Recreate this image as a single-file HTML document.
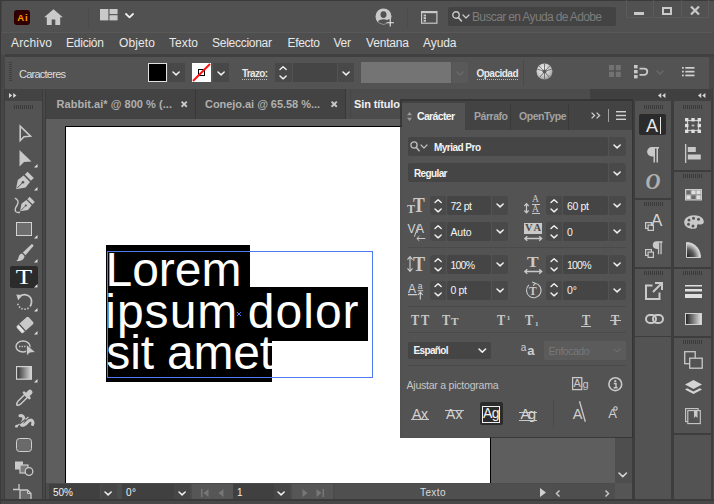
<!DOCTYPE html>
<html><head><meta charset="utf-8"><title>Illustrator</title>
<style>
html,body{margin:0;padding:0;}
body{width:714px;height:504px;overflow:hidden;background:#4a4a4a;position:relative;font-family:"Liberation Sans",sans-serif;font-size:12px;color:#e6e6e6;}
.a{position:absolute;}
.t{position:absolute;white-space:nowrap;line-height:16px;}
svg{position:absolute;overflow:visible;}
</style></head><body>
<div class="a" style="left:0px;top:0px;width:714px;height:504px;background:#474747;"></div>
<div class="a" style="left:0px;top:0px;width:714px;height:1px;background:#3a3a3a;"></div>
<div class="a" style="left:0px;top:0px;width:1px;height:504px;background:#3a3a3a;"></div>
<div class="a" style="left:1.5px;top:1px;width:712.5px;height:31px;background:#515151;border-top-left-radius:3px;"></div>
<div class="a" style="left:1px;top:32px;width:713px;height:23px;background:#4e4e4e;"></div>
<div class="a" style="left:2px;top:31.5px;width:710px;height:1px;background:#585858;"></div>
<div class="a" style="left:4.5px;top:54.3px;width:709.5px;height:2.4px;background:#404040;"></div>
<div class="a" style="left:5px;top:57px;width:704px;height:32px;background:#535353;"></div>
<div class="a" style="left:4px;top:89px;width:710px;height:415px;background:#3d3d3d;"></div>
<div class="a" style="left:14px;top:10px;width:16px;height:15px;background:#300000;border-radius:3px;"></div>
<svg style="left:43.5px;top:9px" width="19" height="16" viewBox="0 0 19 16"><path d="M9.5 0.3 L0.2 8.2 L2.8 8.2 L2.8 16 L7.7 16 L7.7 10.6 L11.3 10.6 L11.3 16 L16.2 16 L16.2 8.2 L18.8 8.2 Z" fill="#c9c9c9"/></svg>
<div class="a" style="left:88px;top:8px;width:1px;height:20px;background:#4c4c4c;"></div>
<svg style="left:99.8px;top:9.4px" width="17.6" height="11.4" viewBox="0 0 17.6 11.4"><rect x="0" y="0" width="8.4" height="11.4" fill="#c9c9c9"/><rect x="9.5" y="0" width="8.1" height="5.1" fill="#c9c9c9"/><rect x="9.5" y="6.2" width="8.1" height="5.2" fill="#c9c9c9"/></svg>
<svg style="left:126.0px;top:14.0px" width="7" height="3.4" viewBox="0 0 7 3.4"><path d="M0 0 L3.5 3.4 L7 0" fill="none" stroke="#f0f0f0" stroke-width="1.8" stroke-linecap="round" stroke-linejoin="round"/></svg>
<svg style="left:375.3px;top:7.5px" width="19" height="19" viewBox="0 0 19 19"><circle cx="8.5" cy="8.5" r="8" fill="#c9c9c9"/><ellipse cx="8.5" cy="6.6" rx="3" ry="3.4" fill="#515151"/><path d="M3 14 C3.6 10.4 13.4 10.4 14 14 C11.5 16.6 5.5 16.6 3 14Z" fill="#515151"/><circle cx="15.2" cy="14.7" r="3.6" fill="#515151"/><path d="M15.2 11 V18.4 M11.5 14.7 H18.9" stroke="#ececec" stroke-width="1.1"/></svg>
<div class="a" style="left:406.5px;top:8px;width:1px;height:20px;background:#4c4c4c;"></div>
<svg style="left:421px;top:11px" width="16.5" height="13" viewBox="0 0 16.5 13"><rect x="0.6" y="0.6" width="15.3" height="11.6" fill="none" stroke="#c9c9c9" stroke-width="1.2"/><rect x="0.6" y="0.6" width="15.3" height="1.6" fill="#c9c9c9"/><rect x="2.6" y="3.6" width="2.4" height="1.9" fill="#c9c9c9"/><rect x="2.6" y="6.2" width="2.4" height="1.9" fill="#c9c9c9"/><rect x="2.6" y="8.8" width="2.4" height="1.9" fill="#c9c9c9"/></svg>
<div class="a" style="left:448px;top:7px;width:168px;height:19px;background:#434343;border-radius:2px;"></div>
<svg style="left:452px;top:11px" width="10" height="11" viewBox="0 0 10 11"><circle cx="4" cy="4" r="3.2" fill="none" stroke="#c9c9c9" stroke-width="1.4"/><path d="M6.4 6.6 L9.5 10" stroke="#c9c9c9" stroke-width="1.6" stroke-linecap="round"/></svg>
<svg style="left:463.0px;top:14.5px" width="6" height="3" viewBox="0 0 6 3"><path d="M0 0 L3.0 3 L6 0" fill="none" stroke="#c9c9c9" stroke-width="1.3" stroke-linecap="round" stroke-linejoin="round"/></svg>
<div class="a" style="left:626px;top:0px;width:83px;height:18px;background:transparent;border:1px solid #5a5a5a;border-top:none;box-sizing:border-box;"></div>
<div class="a" style="left:653px;top:0px;width:1px;height:18px;background:#5a5a5a;"></div>
<div class="a" style="left:681px;top:0px;width:1px;height:18px;background:#5a5a5a;"></div>
<div class="a" style="left:634px;top:12px;width:10px;height:3px;background:#c9c9c9;"></div>
<div class="a" style="left:662px;top:7px;width:10px;height:8px;background:transparent;border:2px solid #c9c9c9;box-sizing:border-box;"></div>
<svg style="left:690px;top:6px" width="10" height="9" viewBox="0 0 10 9"><path d="M1 0.5 L9 8.5 M9 0.5 L1 8.5" stroke="#c9c9c9" stroke-width="2.2"/></svg>
<svg style="left:9px;top:62px" width="3" height="20" viewBox="0 0 3 20"><rect x="0" y="0" width="3" height="1" fill="#3f3f3f"/><rect x="0" y="2" width="3" height="1" fill="#3f3f3f"/><rect x="0" y="4" width="3" height="1" fill="#3f3f3f"/><rect x="0" y="6" width="3" height="1" fill="#3f3f3f"/><rect x="0" y="8" width="3" height="1" fill="#3f3f3f"/><rect x="0" y="10" width="3" height="1" fill="#3f3f3f"/><rect x="0" y="12" width="3" height="1" fill="#3f3f3f"/><rect x="0" y="14" width="3" height="1" fill="#3f3f3f"/><rect x="0" y="16" width="3" height="1" fill="#3f3f3f"/><rect x="0" y="18" width="3" height="1" fill="#3f3f3f"/></svg>
<div class="a" style="left:148px;top:63px;width:19px;height:19px;background:#000;border:1px solid #e0e0e0;box-sizing:border-box;"></div>
<div class="a" style="left:168px;top:63px;width:17px;height:19px;background:#484848;"></div>
<svg style="left:173.3px;top:71.55px" width="6.2" height="2.9" viewBox="0 0 6.2 2.9"><path d="M0 0 L3.1 2.9 L6.2 0" fill="none" stroke="#f0f0f0" stroke-width="1.5" stroke-linecap="round" stroke-linejoin="round"/></svg>
<svg style="left:192px;top:63px" width="19" height="19" viewBox="0 0 19 19"><rect x="0" y="0" width="19" height="19" fill="#fff"/><rect x="6.5" y="6.5" width="6" height="6" fill="none" stroke="#000" stroke-width="1"/><path d="M1 18 L18 1" stroke="#ff1010" stroke-width="2"/></svg>
<div class="a" style="left:213px;top:63px;width:16px;height:19px;background:#484848;"></div>
<svg style="left:217.9px;top:71.55px" width="6.2" height="2.9" viewBox="0 0 6.2 2.9"><path d="M0 0 L3.1 2.9 L6.2 0" fill="none" stroke="#f0f0f0" stroke-width="1.5" stroke-linecap="round" stroke-linejoin="round"/></svg>
<div class="a" style="left:275px;top:63px;width:17px;height:19px;background:#484848;"></div>
<svg style="left:280.4px;top:65.7px" width="6.2" height="13.6" viewBox="0 0 6.2 13.6"><path d="M0 3.6 L3.1 0.7 L6.2 3.6 M0 10 L3.1 12.9 L6.2 10" fill="none" stroke="#f0f0f0" stroke-width="1.4" stroke-linecap="round" stroke-linejoin="round"/></svg>
<div class="a" style="left:293px;top:63px;width:44px;height:19px;background:#454545;"></div>
<div class="a" style="left:338px;top:63px;width:16px;height:19px;background:#484848;"></div>
<svg style="left:342.9px;top:71.55px" width="6.2" height="2.9" viewBox="0 0 6.2 2.9"><path d="M0 0 L3.1 2.9 L6.2 0" fill="none" stroke="#f0f0f0" stroke-width="1.5" stroke-linecap="round" stroke-linejoin="round"/></svg>
<div class="a" style="left:361px;top:62px;width:90px;height:21px;background:#747474;"></div>
<div class="a" style="left:452px;top:62px;width:15.5px;height:21px;background:#595959;border-radius:0 2px 2px 0;"></div>
<svg style="left:456.9px;top:71.55px" width="6.2" height="2.9" viewBox="0 0 6.2 2.9"><path d="M0 0 L3.1 2.9 L6.2 0" fill="none" stroke="#6a6a6a" stroke-width="1.4" stroke-linecap="round" stroke-linejoin="round"/></svg>
<div class="a" style="left:523px;top:60px;width:1px;height:26px;background:#4a4a4a;"></div>
<svg style="left:535.5px;top:62.5px" width="17" height="17" viewBox="0 0 17 17"><defs><radialGradient id="sg" cx="0.42" cy="0.38" r="0.7"><stop offset="0" stop-color="#f2f2f2"/><stop offset="0.65" stop-color="#c4c4c4"/><stop offset="1" stop-color="#8a8a8a"/></radialGradient></defs><circle cx="8.5" cy="8.5" r="8" fill="url(#sg)"/><path d="M8.5 8.5 L8.5 0.8 M8.5 8.5 L15.8 6 M8.5 8.5 L13.5 14.6 M8.5 8.5 L3.5 14.6 M8.5 8.5 L1.2 6 M8.5 8.5 L3 2.8 M8.5 8.5 L14 2.8 M8.5 8.5 L8.5 16.2" stroke="#6a6a6a" stroke-width="0.9"/><circle cx="8.5" cy="8.5" r="2" fill="#5a5a5a"/></svg>
<svg style="left:609px;top:65px" width="12" height="13" viewBox="0 0 12 13"><rect x="0" y="0" width="5" height="5.2" fill="#727272"/><rect x="0" y="6.8" width="5" height="5.2" fill="#727272"/><rect x="6.8" y="0" width="5" height="5.2" fill="#727272"/><rect x="6.8" y="6.8" width="5" height="5.2" fill="#727272"/></svg>
<svg style="left:633.5px;top:65px" width="14.5" height="13.5" viewBox="0 0 14.5 13.5"><rect x="0" y="0" width="3.6" height="3.4" fill="#c9c9c9"/><rect x="0" y="5" width="3.6" height="3.4" fill="#c9c9c9"/><rect x="0" y="10" width="3.6" height="3.4" fill="#c9c9c9"/><path d="M5.5 3.6 H10.2 A3.1 3.1 0 0 1 10.2 9.8 H5.5" fill="none" stroke="#c9c9c9" stroke-width="1.8"/></svg>
<svg style="left:656.9px;top:70.55px" width="6.2" height="2.9" viewBox="0 0 6.2 2.9"><path d="M0 0 L3.1 2.9 L6.2 0" fill="none" stroke="#6a6a6a" stroke-width="1.4" stroke-linecap="round" stroke-linejoin="round"/></svg>
<svg style="left:682.3px;top:67.2px" width="12.5" height="9.4" viewBox="0 0 12.5 9.4"><rect x="0" y="0" width="1.8" height="1.7" fill="#d0d0d0"/><rect x="3.3" y="0" width="9.2" height="1.7" fill="#d0d0d0"/><rect x="0" y="3.8" width="1.8" height="1.7" fill="#d0d0d0"/><rect x="3.3" y="3.8" width="9.2" height="1.7" fill="#d0d0d0"/><rect x="0" y="7.6" width="1.8" height="1.7" fill="#d0d0d0"/><rect x="3.3" y="7.6" width="9.2" height="1.7" fill="#d0d0d0"/></svg>
<div class="a" style="left:5px;top:89px;width:37px;height:12px;background:#434343;"></div>
<svg style="left:9px;top:93px" width="8" height="5" viewBox="0 0 8 5"><path d="M0 0 L3.2 2.5 L0 5Z M4.2 0 L7.4 2.5 L4.2 5Z" fill="#d8d8d8"/></svg>
<div class="a" style="left:5px;top:101px;width:37px;height:399px;background:#535353;"></div>
<div class="a" style="left:42px;top:89px;width:4px;height:411px;background:#3b3b3b;"></div>
<div class="a" style="left:43.2px;top:89px;width:1.5px;height:411px;background:#484848;"></div>
<svg style="left:14px;top:105px" width="19" height="4" viewBox="0 0 19 4"><rect x="0" y="0" width="1" height="4" fill="#3a3a3a"/><rect x="2" y="0" width="1" height="4" fill="#3a3a3a"/><rect x="4" y="0" width="1" height="4" fill="#3a3a3a"/><rect x="6" y="0" width="1" height="4" fill="#3a3a3a"/><rect x="8" y="0" width="1" height="4" fill="#3a3a3a"/><rect x="10" y="0" width="1" height="4" fill="#3a3a3a"/><rect x="12" y="0" width="1" height="4" fill="#3a3a3a"/><rect x="14" y="0" width="1" height="4" fill="#3a3a3a"/><rect x="16" y="0" width="1" height="4" fill="#3a3a3a"/><rect x="18" y="0" width="1" height="4" fill="#3a3a3a"/></svg>
<svg style="left:19px;top:125px" width="13" height="18" viewBox="0 0 13 18"><path d="M1.2 1.2 L1.2 15.5 L5 11.8 L11.5 11.2 Z" fill="none" stroke="#c9c9c9" stroke-width="1.6" stroke-linejoin="miter"/></svg>
<svg style="left:19px;top:150px" width="13" height="17" viewBox="0 0 13 17"><path d="M0.5 0 L0.5 16.5 L5 12 L12.5 11.5 Z" fill="#c9c9c9"/></svg>
<svg style="left:34px;top:164.0px" width="3.5" height="3.5" viewBox="0 0 3.5 3.5"><path d="M3.5 0 L3.5 3.5 L0 3.5Z" fill="#e0e0e0"/></svg>
<svg style="left:16px;top:172px" width="18" height="18" viewBox="0 0 18 18"><path d="M0 17.2 L1.8 8 L7.6 3.6 L14 10 L9.6 15.6 Z" fill="#c9c9c9"/><path d="M0.8 16.4 L6.3 10.9" stroke="#535353" stroke-width="1"/><circle cx="7" cy="10.2" r="1.3" fill="#535353"/><path d="M8.8 2.6 L11.6 -0.2 L17.8 6 L15 8.8 Z" fill="#c9c9c9"/></svg>
<svg style="left:34px;top:186.5px" width="3.5" height="3.5" viewBox="0 0 3.5 3.5"><path d="M3.5 0 L3.5 3.5 L0 3.5Z" fill="#e0e0e0"/></svg>
<svg style="left:19.5px;top:196.5px" width="15" height="15" viewBox="0 0 18 18"><path d="M0 17.2 L1.8 8 L7.6 3.6 L14 10 L9.6 15.6 Z" fill="#c9c9c9"/><path d="M0.8 16.4 L6.3 10.9" stroke="#535353" stroke-width="1"/><circle cx="7" cy="10.2" r="1.3" fill="#535353"/><path d="M8.8 2.6 L11.6 -0.2 L17.8 6 L15 8.8 Z" fill="#c9c9c9"/></svg>
<svg style="left:14px;top:197px" width="8" height="17" viewBox="0 0 8 17"><path d="M0.8 1.2 C3.8 2.2 5 5 3.2 8 C1.2 11 0.5 13.5 2 14.8 C3 15.6 4.5 15.6 6 15.2" fill="none" stroke="#c9c9c9" stroke-width="1.4"/></svg>
<div class="a" style="left:16px;top:222px;width:16px;height:13.5px;background:#6e6e6e;border:1.5px solid #d2d2d2;box-sizing:border-box;"></div>
<svg style="left:34px;top:234.5px" width="3.5" height="3.5" viewBox="0 0 3.5 3.5"><path d="M3.5 0 L3.5 3.5 L0 3.5Z" fill="#e0e0e0"/></svg>
<svg style="left:16px;top:244px" width="18" height="18" viewBox="0 0 18 18"><path d="M15.5 0.3 C16.8 -0.2 17.8 0.9 17.2 2.2 L9.5 11.2 L6.8 8.5 Z" fill="#c9c9c9"/><path d="M6 9.5 L8.5 12 C8.5 15.5 4.5 17.8 0.3 17 C2.8 15.5 2.2 13.8 3 12 C3.6 10.5 4.8 9.8 6 9.5Z" fill="#c9c9c9"/></svg>
<svg style="left:34px;top:258.5px" width="3.5" height="3.5" viewBox="0 0 3.5 3.5"><path d="M3.5 0 L3.5 3.5 L0 3.5Z" fill="#e0e0e0"/></svg>
<div class="a" style="left:10px;top:266px;width:28px;height:22px;background:#2b2b2b;border-radius:2px;"></div>
<svg style="left:16px;top:269px" width="16" height="16" viewBox="0 0 16 16"><text x="8" y="14.6" text-anchor="middle" font-family="Liberation Serif,serif" font-size="21" fill="#ffffff" transform="translate(8 0) scale(1.28 1) translate(-8 0)">T</text></svg>
<svg style="left:34px;top:283.5px" width="3.5" height="3.5" viewBox="0 0 3.5 3.5"><path d="M3.5 0 L3.5 3.5 L0 3.5Z" fill="#e0e0e0"/></svg>
<svg style="left:16px;top:293px" width="18" height="18" viewBox="0 0 18 18"><path d="M3.2 4.2 A7 7 0 0 1 15.5 9.5 A7 7 0 0 1 14 13.5" fill="none" stroke="#c9c9c9" stroke-width="1.7"/><path d="M12.5 15 A7 7 0 0 1 1.6 9.5" fill="none" stroke="#c9c9c9" stroke-width="1.6" stroke-dasharray="1.4 1.6"/><path d="M0.3 1.5 L6.5 2 L2.2 7.2 Z" fill="#c9c9c9"/></svg>
<svg style="left:34px;top:307.5px" width="3.5" height="3.5" viewBox="0 0 3.5 3.5"><path d="M3.5 0 L3.5 3.5 L0 3.5Z" fill="#e0e0e0"/></svg>
<svg style="left:16px;top:316px" width="18" height="18" viewBox="0 0 18 18"><g transform="rotate(-42 9 9)"><rect x="1" y="4.2" width="16" height="9.6" rx="1.6" fill="#c9c9c9"/><rect x="4.6" y="4.2" width="1.3" height="9.6" fill="#535353"/><rect x="1.9" y="5.2" width="2.2" height="7.6" rx="0.8" fill="#e8e8e8"/></g></svg>
<svg style="left:34px;top:330.5px" width="3.5" height="3.5" viewBox="0 0 3.5 3.5"><path d="M3.5 0 L3.5 3.5 L0 3.5Z" fill="#e0e0e0"/></svg>
<svg style="left:15px;top:340px" width="21" height="17" viewBox="0 0 21 17"><ellipse cx="8" cy="6.5" rx="7" ry="5.5" fill="none" stroke="#c9c9c9" stroke-width="1.4"/><path d="M4 6.5 H11" stroke="#c9c9c9" stroke-width="1.3" stroke-dasharray="1.3 1.3"/><path d="M11.5 4.5 L11.5 16 L14.5 13 L20.5 12.2 Z" fill="#c9c9c9" stroke="#535353" stroke-width="0.8"/></svg>
<svg style="left:16px;top:366px" width="16" height="14" viewBox="0 0 16 14"><defs><linearGradient id="gt" x1="0" x2="1"><stop offset="0" stop-color="#2e2e2e"/><stop offset="1" stop-color="#d8d8d8"/></linearGradient></defs><rect x="0.6" y="0.6" width="14.8" height="12.6" fill="url(#gt)" stroke="#d2d2d2" stroke-width="1.2"/></svg>
<svg style="left:34px;top:378.5px" width="3.5" height="3.5" viewBox="0 0 3.5 3.5"><path d="M3.5 0 L3.5 3.5 L0 3.5Z" fill="#e0e0e0"/></svg>
<svg style="left:16px;top:389px" width="18" height="17" viewBox="0 0 18 17"><path d="M0.8 16 C0.6 14.5 1.2 13 2.2 12 L9 5.2 L11.8 8 L5 14.8 C4 15.8 2.4 16.4 0.8 16Z" fill="none" stroke="#c9c9c9" stroke-width="1.5" stroke-linejoin="round"/><path d="M8 3.6 L13.4 9" stroke="#c9c9c9" stroke-width="2.6" stroke-linecap="round"/><path d="M11.3 6 L14 3.2" stroke="#c9c9c9" stroke-width="5" stroke-linecap="round"/></svg>
<svg style="left:15px;top:414px" width="19" height="14" viewBox="0 0 19 14"><path d="M5 1.8 C8 1 9.5 3.5 8.5 6 C7.5 8.5 5.5 10 6.5 11 C8 12.2 11 10 12.5 8 C14 6 16.5 5.5 17.5 7 C18.2 8.2 18 9.5 17.5 10.5" fill="none" stroke="#c9c9c9" stroke-width="3" stroke-linecap="round"/><path d="M0.8 12.8 L13 3.5" stroke="#535353" stroke-width="1.1"/><path d="M0.5 13 L4.5 10 M10.5 5.5 L13.5 3" stroke="#c9c9c9" stroke-width="1.3"/><circle cx="1.6" cy="12.2" r="1.4" fill="#c9c9c9"/></svg>
<div class="a" style="left:16px;top:438px;width:16px;height:13.5px;background:#6a6a6a;border:1.5px solid #cfcfcf;border-radius:3.5px;box-sizing:border-box;"></div>
<svg style="left:15px;top:461px" width="19" height="15" viewBox="0 0 19 15"><rect x="0" y="0.5" width="8" height="8" fill="#c9c9c9"/><rect x="5" y="4" width="8" height="8" fill="#7a7a7a" stroke="#c9c9c9" stroke-width="1.2"/><circle cx="14" cy="10.5" r="3.8" fill="#535353" stroke="#c9c9c9" stroke-width="1.3"/></svg>
<svg style="left:13px;top:484px" width="19" height="16" viewBox="0 0 19 16"><path d="M6 0 V6 M0 5.5 H7" stroke="#c9c9c9" stroke-width="1.3"/><path d="M7 6 H14.5 L18 9.5 V16 H7 Z" fill="#6a6a6a" stroke="#c9c9c9" stroke-width="1.3"/><path d="M14.5 6 V9.5 H18" fill="none" stroke="#c9c9c9" stroke-width="1"/></svg>
<div class="a" style="left:46px;top:89px;width:544px;height:29.5px;background:#4c4c4c;"></div>
<div class="a" style="left:46px;top:89px;width:299px;height:29.5px;background:#434343;"></div>
<div class="a" style="left:194.5px;top:90px;width:1px;height:28.5px;background:#383838;"></div>
<div class="a" style="left:344.5px;top:89px;width:1px;height:29.5px;background:#383838;"></div>
<div class="a" style="left:350.3px;top:89px;width:0.8px;height:29.5px;background:#464646;"></div>
<svg style="left:181px;top:101px" width="6.4" height="6.4" viewBox="0 0 6.4 6.4"><path d="M0.6 0.6 L5.8 5.8 M5.8 0.6 L0.6 5.8" stroke="#c9c9c9" stroke-width="1.9"/></svg>
<svg style="left:330.5px;top:101px" width="6.4" height="6.4" viewBox="0 0 6.4 6.4"><path d="M0.6 0.6 L5.8 5.8 M5.8 0.6 L0.6 5.8" stroke="#c9c9c9" stroke-width="1.9"/></svg>
<div class="a" style="left:46px;top:118.5px;width:569px;height:364.5px;background:#5e5e5e;"></div>
<div class="a" style="left:65px;top:126px;width:426px;height:357px;background:#fff;border:1px solid #000;border-bottom:none;box-sizing:border-box;"></div>
<div class="a" style="left:615px;top:119px;width:17px;height:364px;background:#4e4e4e;"></div>
<svg style="left:619.25px;top:473.2px" width="7.5" height="3.6" viewBox="0 0 7.5 3.6"><path d="M0 0 L3.75 3.6 L7.5 0" fill="none" stroke="#d4d4d4" stroke-width="1.6" stroke-linecap="round" stroke-linejoin="round"/></svg>
<div class="a" style="left:46px;top:483px;width:586px;height:16.5px;background:#4c4c4c;"></div>
<div class="a" style="left:49px;top:484px;width:51px;height:15px;background:#404040;"></div>
<div class="a" style="left:100.5px;top:484px;width:16.5px;height:15px;background:#464646;"></div>
<svg style="left:105.2px;top:492.05px" width="6.2" height="2.9" viewBox="0 0 6.2 2.9"><path d="M0 0 L3.1 2.9 L6.2 0" fill="none" stroke="#f0f0f0" stroke-width="1.5" stroke-linecap="round" stroke-linejoin="round"/></svg>
<div class="a" style="left:121.5px;top:484px;width:52px;height:15px;background:#404040;"></div>
<div class="a" style="left:174px;top:484px;width:16px;height:15px;background:#464646;"></div>
<svg style="left:178.9px;top:492.05px" width="6.2" height="2.9" viewBox="0 0 6.2 2.9"><path d="M0 0 L3.1 2.9 L6.2 0" fill="none" stroke="#f0f0f0" stroke-width="1.5" stroke-linecap="round" stroke-linejoin="round"/></svg>
<div class="a" style="left:192px;top:484px;width:41px;height:15px;background:#565656;"></div>
<div class="a" style="left:233px;top:484px;width:40.5px;height:15px;background:#404040;"></div>
<div class="a" style="left:274px;top:484px;width:15.5px;height:15px;background:#464646;"></div>
<svg style="left:278.4px;top:492.05px" width="6.2" height="2.9" viewBox="0 0 6.2 2.9"><path d="M0 0 L3.1 2.9 L6.2 0" fill="none" stroke="#f0f0f0" stroke-width="1.5" stroke-linecap="round" stroke-linejoin="round"/></svg>
<div class="a" style="left:292px;top:484px;width:41px;height:15px;background:#565656;"></div>
<div class="a" style="left:335px;top:484px;width:216px;height:15px;background:#4f4f4f;"></div>
<svg style="left:201px;top:489px" width="8" height="8" viewBox="0 0 8 8"><rect x="0" y="0" width="1.5" height="8" fill="#777"/><path d="M7.5 0 L2.5 4 L7.5 8Z" fill="#777"/></svg>
<svg style="left:218px;top:489px" width="6" height="8" viewBox="0 0 6 8"><path d="M5.5 0 L0.5 4 L5.5 8Z" fill="#777"/></svg>
<svg style="left:302px;top:489px" width="6" height="8" viewBox="0 0 6 8"><path d="M0.5 0 L5.5 4 L0.5 8Z" fill="#777"/></svg>
<svg style="left:316px;top:489px" width="8" height="8" viewBox="0 0 8 8"><rect x="6.5" y="0" width="1.5" height="8" fill="#777"/><path d="M0.5 0 L5.5 4 L0.5 8Z" fill="#777"/></svg>
<svg style="left:540px;top:488px" width="6" height="9" viewBox="0 0 6 9"><path d="M0 0 L6 4.5 L0 9Z" fill="#d0d0d0"/></svg>
<div class="a" style="left:551px;top:483.5px;width:64px;height:15.5px;background:#4e4e4e;"></div>
<div class="a" style="left:615px;top:483px;width:17px;height:16.5px;background:#555;"></div>
<svg style="left:556px;top:489.5px" width="4" height="7" viewBox="0 0 4 7"><path d="M3.5 0.5 L0.5 3.5 L3.5 6.5" fill="none" stroke="#c4c4c4" stroke-width="1.5"/></svg>
<svg style="left:605px;top:489.5px" width="4" height="7" viewBox="0 0 4 7"><path d="M0.5 0.5 L3.5 3.5 L0.5 6.5" fill="none" stroke="#c4c4c4" stroke-width="1.5"/></svg>
<div class="a" style="left:106px;top:245px;width:144px;height:42px;background:#000;"></div>
<div class="a" style="left:106px;top:286.5px;width:262px;height:54px;background:#000;"></div>
<div class="a" style="left:106px;top:340px;width:166px;height:41.7px;background:#000;"></div>
<div class="a" style="left:106.5px;top:251px;width:266.5px;height:126.8px;background:transparent;border:1px solid #4d7cf0;box-sizing:border-box;"></div>
<svg style="left:236.5px;top:312px" width="4" height="4" viewBox="0 0 4 4"><path d="M0 0 L4 4 M4 0 L0 4" stroke="#4d7cf0" stroke-width="1"/></svg>
<div class="a" style="left:590px;top:89px;width:124px;height:12px;background:#404040;"></div>
<svg style="left:657.5px;top:92.5px" width="8" height="5" viewBox="0 0 8 5"><path d="M3.2 0 L0 2.5 L3.2 5Z M7.4 0 L4.2 2.5 L7.4 5Z" fill="#d8d8d8"/></svg>
<svg style="left:698px;top:92.5px" width="8" height="5" viewBox="0 0 8 5"><path d="M3.2 0 L0 2.5 L3.2 5Z M7.4 0 L4.2 2.5 L7.4 5Z" fill="#d8d8d8"/></svg>
<div class="a" style="left:634.5px;top:101px;width:36.5px;height:97px;background:#535353;"></div>
<div class="a" style="left:634.5px;top:200px;width:36.5px;height:67px;background:#535353;"></div>
<div class="a" style="left:634.5px;top:269px;width:36.5px;height:66.5px;background:#535353;"></div>
<div class="a" style="left:634.5px;top:337px;width:36.5px;height:163px;background:#535353;"></div>
<div class="a" style="left:674px;top:101px;width:37px;height:68.5px;background:#535353;"></div>
<div class="a" style="left:674px;top:172px;width:37px;height:95px;background:#535353;"></div>
<div class="a" style="left:674px;top:269px;width:37px;height:66.5px;background:#535353;"></div>
<div class="a" style="left:674px;top:337.5px;width:37px;height:95px;background:#535353;"></div>
<div class="a" style="left:674px;top:434.5px;width:37px;height:65.5px;background:#535353;"></div>
<div class="a" style="left:711.5px;top:89px;width:1px;height:410px;background:#3c3c3c;"></div>
<div class="a" style="left:712.5px;top:89px;width:1.5px;height:410px;background:#4c4c4c;"></div>
<svg style="left:644px;top:105px" width="19" height="4" viewBox="0 0 19 4"><rect x="0" y="0" width="1" height="4" fill="#3a3a3a"/><rect x="2" y="0" width="1" height="4" fill="#3a3a3a"/><rect x="4" y="0" width="1" height="4" fill="#3a3a3a"/><rect x="6" y="0" width="1" height="4" fill="#3a3a3a"/><rect x="8" y="0" width="1" height="4" fill="#3a3a3a"/><rect x="10" y="0" width="1" height="4" fill="#3a3a3a"/><rect x="12" y="0" width="1" height="4" fill="#3a3a3a"/><rect x="14" y="0" width="1" height="4" fill="#3a3a3a"/><rect x="16" y="0" width="1" height="4" fill="#3a3a3a"/><rect x="18" y="0" width="1" height="4" fill="#3a3a3a"/></svg>
<svg style="left:644px;top:202px" width="19" height="4" viewBox="0 0 19 4"><rect x="0" y="0" width="1" height="4" fill="#3a3a3a"/><rect x="2" y="0" width="1" height="4" fill="#3a3a3a"/><rect x="4" y="0" width="1" height="4" fill="#3a3a3a"/><rect x="6" y="0" width="1" height="4" fill="#3a3a3a"/><rect x="8" y="0" width="1" height="4" fill="#3a3a3a"/><rect x="10" y="0" width="1" height="4" fill="#3a3a3a"/><rect x="12" y="0" width="1" height="4" fill="#3a3a3a"/><rect x="14" y="0" width="1" height="4" fill="#3a3a3a"/><rect x="16" y="0" width="1" height="4" fill="#3a3a3a"/><rect x="18" y="0" width="1" height="4" fill="#3a3a3a"/></svg>
<svg style="left:644px;top:271px" width="19" height="4" viewBox="0 0 19 4"><rect x="0" y="0" width="1" height="4" fill="#3a3a3a"/><rect x="2" y="0" width="1" height="4" fill="#3a3a3a"/><rect x="4" y="0" width="1" height="4" fill="#3a3a3a"/><rect x="6" y="0" width="1" height="4" fill="#3a3a3a"/><rect x="8" y="0" width="1" height="4" fill="#3a3a3a"/><rect x="10" y="0" width="1" height="4" fill="#3a3a3a"/><rect x="12" y="0" width="1" height="4" fill="#3a3a3a"/><rect x="14" y="0" width="1" height="4" fill="#3a3a3a"/><rect x="16" y="0" width="1" height="4" fill="#3a3a3a"/><rect x="18" y="0" width="1" height="4" fill="#3a3a3a"/></svg>
<svg style="left:683px;top:105px" width="20" height="4" viewBox="0 0 20 4"><rect x="0" y="0" width="1" height="4" fill="#3a3a3a"/><rect x="2" y="0" width="1" height="4" fill="#3a3a3a"/><rect x="4" y="0" width="1" height="4" fill="#3a3a3a"/><rect x="6" y="0" width="1" height="4" fill="#3a3a3a"/><rect x="8" y="0" width="1" height="4" fill="#3a3a3a"/><rect x="10" y="0" width="1" height="4" fill="#3a3a3a"/><rect x="12" y="0" width="1" height="4" fill="#3a3a3a"/><rect x="14" y="0" width="1" height="4" fill="#3a3a3a"/><rect x="16" y="0" width="1" height="4" fill="#3a3a3a"/><rect x="18" y="0" width="1" height="4" fill="#3a3a3a"/></svg>
<svg style="left:683px;top:174px" width="20" height="4" viewBox="0 0 20 4"><rect x="0" y="0" width="1" height="4" fill="#3a3a3a"/><rect x="2" y="0" width="1" height="4" fill="#3a3a3a"/><rect x="4" y="0" width="1" height="4" fill="#3a3a3a"/><rect x="6" y="0" width="1" height="4" fill="#3a3a3a"/><rect x="8" y="0" width="1" height="4" fill="#3a3a3a"/><rect x="10" y="0" width="1" height="4" fill="#3a3a3a"/><rect x="12" y="0" width="1" height="4" fill="#3a3a3a"/><rect x="14" y="0" width="1" height="4" fill="#3a3a3a"/><rect x="16" y="0" width="1" height="4" fill="#3a3a3a"/><rect x="18" y="0" width="1" height="4" fill="#3a3a3a"/></svg>
<svg style="left:683px;top:271px" width="20" height="4" viewBox="0 0 20 4"><rect x="0" y="0" width="1" height="4" fill="#3a3a3a"/><rect x="2" y="0" width="1" height="4" fill="#3a3a3a"/><rect x="4" y="0" width="1" height="4" fill="#3a3a3a"/><rect x="6" y="0" width="1" height="4" fill="#3a3a3a"/><rect x="8" y="0" width="1" height="4" fill="#3a3a3a"/><rect x="10" y="0" width="1" height="4" fill="#3a3a3a"/><rect x="12" y="0" width="1" height="4" fill="#3a3a3a"/><rect x="14" y="0" width="1" height="4" fill="#3a3a3a"/><rect x="16" y="0" width="1" height="4" fill="#3a3a3a"/><rect x="18" y="0" width="1" height="4" fill="#3a3a3a"/></svg>
<svg style="left:683px;top:340px" width="20" height="4" viewBox="0 0 20 4"><rect x="0" y="0" width="1" height="4" fill="#3a3a3a"/><rect x="2" y="0" width="1" height="4" fill="#3a3a3a"/><rect x="4" y="0" width="1" height="4" fill="#3a3a3a"/><rect x="6" y="0" width="1" height="4" fill="#3a3a3a"/><rect x="8" y="0" width="1" height="4" fill="#3a3a3a"/><rect x="10" y="0" width="1" height="4" fill="#3a3a3a"/><rect x="12" y="0" width="1" height="4" fill="#3a3a3a"/><rect x="14" y="0" width="1" height="4" fill="#3a3a3a"/><rect x="16" y="0" width="1" height="4" fill="#3a3a3a"/><rect x="18" y="0" width="1" height="4" fill="#3a3a3a"/></svg>
<div class="a" style="left:639px;top:114px;width:27px;height:21px;background:#2b2b2b;border-radius:2px;"></div>
<div class="a" style="left:660.2px;top:116.5px;width:1.3px;height:17.5px;background:#e8e8e8;"></div>
<svg style="left:647px;top:146.5px" width="12" height="15.5" viewBox="0 0 12 15.5"><path d="M4.8 0 H12 V1.6 H11 V15.5 H9.5 V1.6 H8 V15.5 H6.5 V9.4 H4.8 A4.7 4.7 0 0 1 4.8 0Z" fill="#c9c9c9"/></svg>
<svg style="left:645px;top:172px" width="17" height="19" viewBox="0 0 17 19"><text x="8" y="17" text-anchor="middle" font-family="Liberation Serif,serif" font-style="italic" font-weight="bold" font-size="22.5" fill="#b0b0b0" transform="translate(8 0) scale(0.92 1) translate(-8 0)">O</text></svg>
<svg style="left:645px;top:213px" width="19" height="18" viewBox="0 0 19 18"><rect x="0.6" y="9.6" width="5.8" height="5.8" fill="none" stroke="#c9c9c9" stroke-width="1.2"/><rect x="3.1" y="12.1" width="5.3" height="5.3" fill="#535353" stroke="#c9c9c9" stroke-width="1.2"/></svg>
<svg style="left:645px;top:241px" width="19" height="18" viewBox="0 0 19 18"><rect x="0.6" y="8.6" width="5.8" height="5.8" fill="none" stroke="#c9c9c9" stroke-width="1.2"/><rect x="3.1" y="11.1" width="5.3" height="5.3" fill="#535353" stroke="#c9c9c9" stroke-width="1.2"/><path d="M11.6 0.3 H17.5 V1.7 H16.7 V13.2 H15.4 V1.7 H14.2 V13.2 H12.9 V7.9 H11.6 A3.8 3.8 0 0 1 11.6 0.3Z" fill="#c9c9c9"/></svg>
<svg style="left:645px;top:282px" width="18" height="18" viewBox="0 0 18 18"><path d="M7.5 3.5 H1 V17 H14.5 V10.5" fill="none" stroke="#c9c9c9" stroke-width="2"/><path d="M8 10 L16.5 1.5 M10 1 H17 V8" fill="none" stroke="#c9c9c9" stroke-width="2"/></svg>
<svg style="left:644.5px;top:313.5px" width="19" height="10" viewBox="0 0 19 10"><rect x="1" y="1" width="10" height="8" rx="4" fill="none" stroke="#c9c9c9" stroke-width="2"/><rect x="8" y="1" width="10" height="8" rx="4" fill="none" stroke="#c9c9c9" stroke-width="2"/></svg>
<svg style="left:685px;top:117.5px" width="16" height="15" viewBox="0 0 16 15"><rect x="2.5" y="2.5" width="11" height="10" fill="none" stroke="#c9c9c9" stroke-width="1.2"/><rect x="0" y="0" width="3.4" height="3.4" fill="#e0e0e0"/><rect x="0" y="5.8" width="3.4" height="3.4" fill="#e0e0e0"/><rect x="0" y="11.6" width="3.4" height="3.4" fill="#e0e0e0"/><rect x="6.3" y="0" width="3.4" height="3.4" fill="#e0e0e0"/><rect x="6.3" y="11.6" width="3.4" height="3.4" fill="#e0e0e0"/><rect x="12.6" y="0" width="3.4" height="3.4" fill="#e0e0e0"/><rect x="12.6" y="5.8" width="3.4" height="3.4" fill="#e0e0e0"/><rect x="12.6" y="11.6" width="3.4" height="3.4" fill="#e0e0e0"/><path d="M8 6 V9 M6.5 7.5 H9.5" stroke="#c9c9c9" stroke-width="0.8"/></svg>
<svg style="left:685px;top:144px" width="16" height="19" viewBox="0 0 16 19"><rect x="0" y="0" width="1.3" height="19" fill="#c9c9c9"/><rect x="2.8" y="3" width="8" height="5" fill="#c9c9c9"/><rect x="2.8" y="10.5" width="13" height="5" fill="#c9c9c9"/></svg>
<svg style="left:684.5px;top:189px" width="17" height="11.5" viewBox="0 0 17 11.5"><rect x="0.5" y="0.5" width="16" height="10.5" fill="#9a9a9a" stroke="#c9c9c9" stroke-width="1"/><rect x="1.5" y="1.5" width="4" height="3.6" fill="#6a6a6a"/><rect x="6.5" y="1.5" width="4" height="3.6" fill="#e0e0e0"/><rect x="11.5" y="1.5" width="4" height="3.6" fill="#e0e0e0"/><rect x="1.5" y="6.4" width="4" height="3.6" fill="#e0e0e0"/><rect x="6.5" y="6.4" width="4" height="3.6" fill="#6a6a6a"/><rect x="11.5" y="6.4" width="4" height="3.6" fill="#e0e0e0"/></svg>
<svg style="left:683.5px;top:215px" width="20" height="14" viewBox="0 0 20 14"><path d="M10 0.3 C16 0.3 19.8 3.2 19.8 6.8 C19.8 9.2 17.5 10 15.5 9.4 C13.8 9 12.6 10 13 11.4 C13.4 13 11.5 13.8 9 13.8 C4 13.8 0.2 11 0.2 7.2 C0.2 3.2 4.5 0.3 10 0.3Z" fill="#c9c9c9"/><circle cx="5" cy="5" r="1.5" fill="#535353"/><circle cx="9.5" cy="3.3" r="1.5" fill="#535353"/><circle cx="14.5" cy="4.2" r="1.5" fill="#535353"/><circle cx="4.5" cy="9.2" r="1.5" fill="#535353"/><circle cx="9" cy="11" r="1.5" fill="#535353"/></svg>
<svg style="left:686px;top:242px" width="15" height="16" viewBox="0 0 15 16"><defs><radialGradient id="qg" cx="0" cy="1" r="1"><stop offset="0" stop-color="#1e1e1e"/><stop offset="0.55" stop-color="#5a5a5a"/><stop offset="1" stop-color="#e6e6e6"/></radialGradient></defs><path d="M0.5 0.5 C8.5 0.5 14.5 7 14.5 15.5 H0.5 Z" fill="url(#qg)" stroke="#d0d0d0" stroke-width="1"/></svg>
<svg style="left:684.5px;top:284.5px" width="17" height="13" viewBox="0 0 17 13"><rect x="0" y="0" width="17" height="1.5" fill="#e0e0e0"/><rect x="0" y="4" width="17" height="2.5" fill="#e0e0e0"/><rect x="0" y="9" width="17" height="4" fill="#e0e0e0"/></svg>
<svg style="left:685px;top:313px" width="17" height="12" viewBox="0 0 17 12"><defs><linearGradient id="g2" x1="0" x2="1"><stop offset="0" stop-color="#1e1e1e"/><stop offset="1" stop-color="#e6e6e6"/></linearGradient></defs><rect x="0.5" y="0.5" width="16" height="11" fill="url(#g2)" stroke="#d0d0d0" stroke-width="1"/></svg>
<svg style="left:683.5px;top:351px" width="19" height="18" viewBox="0 0 19 18"><rect x="0.7" y="0.7" width="10.5" height="12" fill="none" stroke="#c9c9c9" stroke-width="1.3"/><rect x="5.7" y="7.2" width="12.5" height="10" fill="#535353" stroke="#c9c9c9" stroke-width="1.3"/></svg>
<svg style="left:685px;top:380px" width="17" height="16" viewBox="0 0 17 16"><path d="M8.5 0 L17 4.5 L8.5 9 L0 4.5Z" fill="#d4d4d4"/><path d="M2.2 8.2 L0 9.5 L8.5 14 L17 9.5 L14.8 8.2 L8.5 11.5Z" fill="#d4d4d4"/></svg>
<svg style="left:685px;top:408px" width="16" height="16" viewBox="0 0 16 16"><rect x="0.6" y="0.6" width="12.5" height="13" fill="none" stroke="#c9c9c9" stroke-width="1.1"/><rect x="2.8" y="2.6" width="12.5" height="13" fill="#535353" stroke="#c9c9c9" stroke-width="1.1"/><path d="M9 3 H12.5 V10 L10.7 8.2 L9 10Z" fill="#c9c9c9"/></svg>
<div class="a" style="left:400px;top:99px;width:233px;height:339px;background:#333;opacity:0.85;"></div>
<div class="a" style="left:402px;top:101px;width:230px;height:335.5px;background:#535353;"></div>
<div class="a" style="left:402px;top:101px;width:230px;height:29px;background:#434343;"></div>
<div class="a" style="left:402px;top:103px;width:63px;height:27px;background:#535353;"></div>
<div class="a" style="left:510px;top:104px;width:1px;height:26px;background:#3a3a3a;"></div>
<div class="a" style="left:568px;top:104px;width:1px;height:26px;background:#3a3a3a;"></div>
<svg style="left:407px;top:111.5px" width="5" height="9" viewBox="0 0 5 9"><path d="M0 3.2 L2.5 0 L5 3.2Z M0 5.8 L2.5 9 L5 5.8Z" fill="#9a9a9a"/></svg>
<svg style="left:591px;top:112px" width="10" height="7" viewBox="0 0 10 7"><path d="M0.6 0.6 L3.6 3.5 L0.6 6.4 M5.6 0.6 L8.6 3.5 L5.6 6.4" fill="none" stroke="#d0d0d0" stroke-width="1.3"/></svg>
<div class="a" style="left:608px;top:109px;width:1px;height:13px;background:#a0a0a0;"></div>
<svg style="left:616px;top:111px" width="10" height="9" viewBox="0 0 10 9"><rect y="0" width="10" height="1.4" fill="#d0d0d0"/><rect y="3.8" width="10" height="1.4" fill="#d0d0d0"/><rect y="7.6" width="10" height="1.4" fill="#d0d0d0"/></svg>
<div class="a" style="left:408px;top:137px;width:200px;height:19px;background:#454545;border-radius:2px;"></div>
<div class="a" style="left:609px;top:137px;width:16.5px;height:19px;background:#494949;border-radius:0 3px 3px 0;"></div>
<svg style="left:614.1999999999999px;top:145.35000000000002px" width="6.2" height="2.9" viewBox="0 0 6.2 2.9"><path d="M0 0 L3.1 2.9 L6.2 0" fill="none" stroke="#f0f0f0" stroke-width="1.5" stroke-linecap="round" stroke-linejoin="round"/></svg>
<svg style="left:410px;top:141px" width="10" height="11" viewBox="0 0 10 11"><circle cx="4" cy="4" r="3.1" fill="none" stroke="#bdbdbd" stroke-width="1.3"/><path d="M6.3 6.5 L9.2 9.8" stroke="#bdbdbd" stroke-width="1.5" stroke-linecap="round"/></svg>
<svg style="left:420.5px;top:145.0px" width="6" height="3" viewBox="0 0 6 3"><path d="M0 0 L3.0 3 L6 0" fill="none" stroke="#bdbdbd" stroke-width="1.2" stroke-linecap="round" stroke-linejoin="round"/></svg>
<div class="a" style="left:408px;top:163.3px;width:200px;height:18.7px;background:#454545;border-radius:2px;"></div>
<div class="a" style="left:609px;top:163.3px;width:16.5px;height:18.7px;background:#494949;border-radius:0 3px 3px 0;"></div>
<svg style="left:614.1999999999999px;top:171.50000000000003px" width="6.2" height="2.9" viewBox="0 0 6.2 2.9"><path d="M0 0 L3.1 2.9 L6.2 0" fill="none" stroke="#f0f0f0" stroke-width="1.5" stroke-linecap="round" stroke-linejoin="round"/></svg>
<div class="a" style="left:430px;top:196px;width:16px;height:19px;background:#494949;border-radius:3px 0 0 3px;"></div>
<svg style="left:434.9px;top:198.7px" width="6.2" height="13.6" viewBox="0 0 6.2 13.6"><path d="M0 3.6 L3.1 0.7 L6.2 3.6 M0 10 L3.1 12.9 L6.2 10" fill="none" stroke="#f0f0f0" stroke-width="1.4" stroke-linecap="round" stroke-linejoin="round"/></svg>
<div class="a" style="left:446.5px;top:196px;width:44px;height:19px;background:#454545;border-radius:2px;"></div>
<div class="a" style="left:491.5px;top:196px;width:16.5px;height:19px;background:#494949;border-radius:0 3px 3px 0;"></div>
<svg style="left:496.7px;top:204.35000000000002px" width="6.2" height="2.9" viewBox="0 0 6.2 2.9"><path d="M0 0 L3.1 2.9 L6.2 0" fill="none" stroke="#f0f0f0" stroke-width="1.5" stroke-linecap="round" stroke-linejoin="round"/></svg>
<div class="a" style="left:546px;top:196px;width:16px;height:19px;background:#494949;border-radius:3px 0 0 3px;"></div>
<svg style="left:550.9px;top:198.7px" width="6.2" height="13.6" viewBox="0 0 6.2 13.6"><path d="M0 3.6 L3.1 0.7 L6.2 3.6 M0 10 L3.1 12.9 L6.2 10" fill="none" stroke="#f0f0f0" stroke-width="1.4" stroke-linecap="round" stroke-linejoin="round"/></svg>
<div class="a" style="left:563px;top:196px;width:45px;height:19px;background:#454545;border-radius:2px;"></div>
<div class="a" style="left:609px;top:196px;width:16.5px;height:19px;background:#494949;border-radius:0 3px 3px 0;"></div>
<svg style="left:614.1999999999999px;top:204.35000000000002px" width="6.2" height="2.9" viewBox="0 0 6.2 2.9"><path d="M0 0 L3.1 2.9 L6.2 0" fill="none" stroke="#f0f0f0" stroke-width="1.5" stroke-linecap="round" stroke-linejoin="round"/></svg>
<div class="a" style="left:430px;top:222px;width:16px;height:19px;background:#494949;border-radius:3px 0 0 3px;"></div>
<svg style="left:434.9px;top:224.7px" width="6.2" height="13.6" viewBox="0 0 6.2 13.6"><path d="M0 3.6 L3.1 0.7 L6.2 3.6 M0 10 L3.1 12.9 L6.2 10" fill="none" stroke="#f0f0f0" stroke-width="1.4" stroke-linecap="round" stroke-linejoin="round"/></svg>
<div class="a" style="left:446.5px;top:222px;width:44px;height:19px;background:#454545;border-radius:2px;"></div>
<div class="a" style="left:491.5px;top:222px;width:16.5px;height:19px;background:#494949;border-radius:0 3px 3px 0;"></div>
<svg style="left:496.7px;top:230.35000000000002px" width="6.2" height="2.9" viewBox="0 0 6.2 2.9"><path d="M0 0 L3.1 2.9 L6.2 0" fill="none" stroke="#f0f0f0" stroke-width="1.5" stroke-linecap="round" stroke-linejoin="round"/></svg>
<div class="a" style="left:546px;top:222px;width:16px;height:19px;background:#494949;border-radius:3px 0 0 3px;"></div>
<svg style="left:550.9px;top:224.7px" width="6.2" height="13.6" viewBox="0 0 6.2 13.6"><path d="M0 3.6 L3.1 0.7 L6.2 3.6 M0 10 L3.1 12.9 L6.2 10" fill="none" stroke="#f0f0f0" stroke-width="1.4" stroke-linecap="round" stroke-linejoin="round"/></svg>
<div class="a" style="left:563px;top:222px;width:45px;height:19px;background:#454545;border-radius:2px;"></div>
<div class="a" style="left:609px;top:222px;width:16.5px;height:19px;background:#494949;border-radius:0 3px 3px 0;"></div>
<svg style="left:614.1999999999999px;top:230.35000000000002px" width="6.2" height="2.9" viewBox="0 0 6.2 2.9"><path d="M0 0 L3.1 2.9 L6.2 0" fill="none" stroke="#f0f0f0" stroke-width="1.5" stroke-linecap="round" stroke-linejoin="round"/></svg>
<div class="a" style="left:430px;top:255px;width:16px;height:19px;background:#494949;border-radius:3px 0 0 3px;"></div>
<svg style="left:434.9px;top:257.7px" width="6.2" height="13.6" viewBox="0 0 6.2 13.6"><path d="M0 3.6 L3.1 0.7 L6.2 3.6 M0 10 L3.1 12.9 L6.2 10" fill="none" stroke="#f0f0f0" stroke-width="1.4" stroke-linecap="round" stroke-linejoin="round"/></svg>
<div class="a" style="left:446.5px;top:255px;width:44px;height:19px;background:#454545;border-radius:2px;"></div>
<div class="a" style="left:491.5px;top:255px;width:16.5px;height:19px;background:#494949;border-radius:0 3px 3px 0;"></div>
<svg style="left:496.7px;top:263.35px" width="6.2" height="2.9" viewBox="0 0 6.2 2.9"><path d="M0 0 L3.1 2.9 L6.2 0" fill="none" stroke="#f0f0f0" stroke-width="1.5" stroke-linecap="round" stroke-linejoin="round"/></svg>
<div class="a" style="left:546px;top:255px;width:16px;height:19px;background:#494949;border-radius:3px 0 0 3px;"></div>
<svg style="left:550.9px;top:257.7px" width="6.2" height="13.6" viewBox="0 0 6.2 13.6"><path d="M0 3.6 L3.1 0.7 L6.2 3.6 M0 10 L3.1 12.9 L6.2 10" fill="none" stroke="#f0f0f0" stroke-width="1.4" stroke-linecap="round" stroke-linejoin="round"/></svg>
<div class="a" style="left:563px;top:255px;width:45px;height:19px;background:#454545;border-radius:2px;"></div>
<div class="a" style="left:609px;top:255px;width:16.5px;height:19px;background:#494949;border-radius:0 3px 3px 0;"></div>
<svg style="left:614.1999999999999px;top:263.35px" width="6.2" height="2.9" viewBox="0 0 6.2 2.9"><path d="M0 0 L3.1 2.9 L6.2 0" fill="none" stroke="#f0f0f0" stroke-width="1.5" stroke-linecap="round" stroke-linejoin="round"/></svg>
<div class="a" style="left:430px;top:280.5px;width:16px;height:19px;background:#494949;border-radius:3px 0 0 3px;"></div>
<svg style="left:434.9px;top:283.2px" width="6.2" height="13.6" viewBox="0 0 6.2 13.6"><path d="M0 3.6 L3.1 0.7 L6.2 3.6 M0 10 L3.1 12.9 L6.2 10" fill="none" stroke="#f0f0f0" stroke-width="1.4" stroke-linecap="round" stroke-linejoin="round"/></svg>
<div class="a" style="left:446.5px;top:280.5px;width:44px;height:19px;background:#454545;border-radius:2px;"></div>
<div class="a" style="left:491.5px;top:280.5px;width:16.5px;height:19px;background:#494949;border-radius:0 3px 3px 0;"></div>
<svg style="left:496.7px;top:288.85px" width="6.2" height="2.9" viewBox="0 0 6.2 2.9"><path d="M0 0 L3.1 2.9 L6.2 0" fill="none" stroke="#f0f0f0" stroke-width="1.5" stroke-linecap="round" stroke-linejoin="round"/></svg>
<div class="a" style="left:546px;top:280.5px;width:16px;height:19px;background:#494949;border-radius:3px 0 0 3px;"></div>
<svg style="left:550.9px;top:283.2px" width="6.2" height="13.6" viewBox="0 0 6.2 13.6"><path d="M0 3.6 L3.1 0.7 L6.2 3.6 M0 10 L3.1 12.9 L6.2 10" fill="none" stroke="#f0f0f0" stroke-width="1.4" stroke-linecap="round" stroke-linejoin="round"/></svg>
<div class="a" style="left:563px;top:280.5px;width:45px;height:19px;background:#454545;border-radius:2px;"></div>
<div class="a" style="left:609px;top:280.5px;width:16.5px;height:19px;background:#494949;border-radius:0 3px 3px 0;"></div>
<svg style="left:614.1999999999999px;top:288.85px" width="6.2" height="2.9" viewBox="0 0 6.2 2.9"><path d="M0 0 L3.1 2.9 L6.2 0" fill="none" stroke="#f0f0f0" stroke-width="1.5" stroke-linecap="round" stroke-linejoin="round"/></svg>
<div class="a" style="left:408px;top:247px;width:218px;height:1px;background:#4a4a4a;"></div>
<div class="a" style="left:408px;top:306px;width:218px;height:1px;background:#4a4a4a;"></div>
<div class="a" style="left:408px;top:332px;width:218px;height:1px;background:#4a4a4a;"></div>
<div class="a" style="left:408px;top:365px;width:218px;height:1px;background:#4a4a4a;"></div>
<svg style="left:407px;top:205px" width="7" height="8" viewBox="0 0 7 8"><text x="0" y="8" font-family="Liberation Serif,serif" font-size="11.5" font-weight="bold" fill="#c9c9c9" transform="scale(1.05 1)" text-anchor="start">T</text></svg>
<svg style="left:413px;top:198px" width="11" height="14" viewBox="0 0 11 14"><text x="0" y="14" font-family="Liberation Serif,serif" font-size="20.5" font-weight="bold" fill="#c9c9c9" transform="scale(0.86 1)" text-anchor="start">T</text></svg>
<svg style="left:524.3px;top:202.5px" width="5" height="10.5" viewBox="0 0 5 10.5"><path d="M2.5 1 V9.5 M0.4 3 L2.5 0.6 L4.6 3 M0.4 7.5 L2.5 9.9 L4.6 7.5" fill="none" stroke="#c9c9c9" stroke-width="1.2"/></svg>
<div class="a" style="left:531.5px;top:203.6px;width:8.5px;height:1px;background:#c9c9c9;"></div>
<div class="a" style="left:531.5px;top:212.6px;width:8.5px;height:1px;background:#c9c9c9;"></div>
<svg style="left:413.5px;top:223.5px" width="5" height="13" viewBox="0 0 5 13"><path d="M4.6 0.3 L0.4 12.7" stroke="#c9c9c9" stroke-width="1"/></svg>
<svg style="left:415.5px;top:235.5px" width="9.5" height="5" viewBox="0 0 9.5 5"><path d="M9.3 2.5 H1 M3.3 0.2 L0.8 2.5 L3.3 4.8" fill="none" stroke="#c9c9c9" stroke-width="1"/></svg>
<div class="a" style="left:523.7px;top:223px;width:18.3px;height:10.5px;background:#c9c9c9;"></div>
<svg style="left:523.5px;top:235.5px" width="18.5" height="5" viewBox="0 0 18.5 5"><path d="M1 2.5 H17.5 M3.3 0.2 L0.8 2.5 L3.3 4.8 M15.2 0.2 L17.7 2.5 L15.2 4.8" fill="none" stroke="#c9c9c9" stroke-width="1.3"/></svg>
<svg style="left:407px;top:256px" width="6" height="16" viewBox="0 0 6 16"><path d="M3 1 V15 M0.5 3.7 L3 0.7 L5.5 3.7 M0.5 12.3 L3 15.3 L5.5 12.3" fill="none" stroke="#c9c9c9" stroke-width="1.1"/></svg>
<svg style="left:413.3px;top:257px" width="12" height="14" viewBox="0 0 12 14"><text x="0" y="14" font-family="Liberation Serif,serif" font-size="20.8" font-weight="bold" fill="#c9c9c9" transform="scale(0.87 1)" text-anchor="start">T</text></svg>
<svg style="left:527.3px;top:256px" width="12" height="10.5" viewBox="0 0 12 10.5"><text x="0" y="10.5" font-family="Liberation Serif,serif" font-size="15.6" font-weight="bold" fill="#c9c9c9" transform="scale(1.12 1)" text-anchor="start">T</text></svg>
<svg style="left:523.5px;top:268.5px" width="18.5" height="5" viewBox="0 0 18.5 5"><path d="M1 2.5 H17.5 M3.3 0.2 L0.8 2.5 L3.3 4.8 M15.2 0.2 L17.7 2.5 L15.2 4.8" fill="none" stroke="#c9c9c9" stroke-width="1.3"/></svg>
<svg style="left:408px;top:290px" width="16" height="10" viewBox="0 0 16 10"><path d="M0 4.6 H9.2 M9.6 0.7 H15.2" stroke="#d0d0d0" stroke-width="1.1"/><path d="M12.3 9.4 V2.6 M9.9 5 L12.3 2.2 L14.7 5" fill="none" stroke="#d0d0d0" stroke-width="1.1"/></svg>
<svg style="left:524.5px;top:282px" width="17" height="17" viewBox="0 0 17 17"><path d="M10 1.2 A7.3 7.3 0 1 1 4 2.9" fill="none" stroke="#c9c9c9" stroke-width="1.1"/><path d="M7.2 0 L10.4 1.4 L8 3.8" fill="none" stroke="#c9c9c9" stroke-width="1.1"/></svg>
<svg style="left:411.3px;top:315.6px" width="9.2" height="9.2" viewBox="0 0 9.2 9.2"><text x="0" y="9.2" font-family="Liberation Serif,serif" font-size="14" font-weight="bold" fill="#c9c9c9" transform="scale(0.8779443254817987 1)" text-anchor="start">T</text></svg>
<svg style="left:421.2px;top:315.6px" width="9.2" height="9.2" viewBox="0 0 9.2 9.2"><text x="0" y="9.2" font-family="Liberation Serif,serif" font-size="14" font-weight="bold" fill="#c9c9c9" transform="scale(0.8779443254817987 1)" text-anchor="start">T</text></svg>
<svg style="left:442.2px;top:315.6px" width="9.2" height="9.2" viewBox="0 0 9.2 9.2"><text x="0" y="9.2" font-family="Liberation Serif,serif" font-size="14" font-weight="bold" fill="#c9c9c9" transform="scale(0.8779443254817987 1)" text-anchor="start">T</text></svg>
<svg style="left:450.6px;top:318.6px" width="9" height="6.2" viewBox="0 0 9 6.2"><text x="0" y="6.2" font-family="Liberation Serif,serif" font-size="9.6" font-weight="bold" fill="#c9c9c9" transform="scale(1.1874999999999998 1)" text-anchor="start">T</text></svg>
<svg style="left:496.8px;top:315.6px" width="9.2" height="9.2" viewBox="0 0 9.2 9.2"><text x="0" y="9.2" font-family="Liberation Serif,serif" font-size="14" font-weight="bold" fill="#c9c9c9" transform="scale(0.8779443254817987 1)" text-anchor="start">T</text></svg>
<svg style="left:525.3px;top:315.6px" width="9.2" height="9.2" viewBox="0 0 9.2 9.2"><text x="0" y="9.2" font-family="Liberation Serif,serif" font-size="14" font-weight="bold" fill="#c9c9c9" transform="scale(0.8779443254817987 1)" text-anchor="start">T</text></svg>
<svg style="left:581.8px;top:315.6px" width="9.2" height="9.2" viewBox="0 0 9.2 9.2"><text x="0" y="9.2" font-family="Liberation Serif,serif" font-size="14" font-weight="bold" fill="#c9c9c9" transform="scale(0.8779443254817987 1)" text-anchor="start">T</text></svg>
<div class="a" style="left:581px;top:326px;width:10.2px;height:1px;background:#c9c9c9;"></div>
<svg style="left:610.8px;top:315.6px" width="9.2" height="9.2" viewBox="0 0 9.2 9.2"><text x="0" y="9.2" font-family="Liberation Serif,serif" font-size="14" font-weight="bold" fill="#c9c9c9" transform="scale(0.8779443254817987 1)" text-anchor="start">T</text></svg>
<div class="a" style="left:609.5px;top:320.2px;width:11.2px;height:1.1px;background:#c9c9c9;"></div>
<div class="a" style="left:408px;top:341.5px;width:82.5px;height:17.5px;background:#454545;border-radius:2px;"></div>
<svg style="left:479.2px;top:348.95px" width="6.6" height="3.1" viewBox="0 0 6.6 3.1"><path d="M0 0 L3.3 3.1 L6.6 0" fill="none" stroke="#f0f0f0" stroke-width="1.5" stroke-linecap="round" stroke-linejoin="round"/></svg>
<div class="a" style="left:543.5px;top:341px;width:82px;height:18.5px;background:#5b5b5b;border-radius:1.5px;"></div>
<svg style="left:614.4px;top:349.05px" width="6.2" height="2.9" viewBox="0 0 6.2 2.9"><path d="M0 0 L3.1 2.9 L6.2 0" fill="none" stroke="#6c6c6c" stroke-width="1.3" stroke-linecap="round" stroke-linejoin="round"/></svg>
<svg style="left:572px;top:377px" width="17" height="14" viewBox="0 0 17 14"><rect x="0.6" y="0.6" width="9.2" height="12" fill="none" stroke="#c9c9c9" stroke-width="1.25"/></svg>
<svg style="left:608px;top:377px" width="15" height="15" viewBox="0 0 15 15"><circle cx="7.3" cy="7.2" r="6.4" fill="none" stroke="#c9c9c9" stroke-width="1.6"/><circle cx="7.3" cy="4.2" r="1.1" fill="#c9c9c9"/><path d="M5.8 6.5 H8 V10.6 M5.6 10.7 H9.6" fill="none" stroke="#c9c9c9" stroke-width="1.4"/></svg>
<div class="a" style="left:411px;top:419.3px;width:18px;height:1.1px;background:#c9c9c9;"></div>
<div class="a" style="left:444.8px;top:410.4px;width:18.8px;height:1.1px;background:#c9c9c9;"></div>
<div class="a" style="left:479.5px;top:401.8px;width:23.2px;height:23.6px;background:#2b2b2b;border-radius:2px;"></div>
<div class="a" style="left:482px;top:406px;width:18px;height:16.5px;background:transparent;border:1.3px solid #f0f0f0;box-sizing:border-box;"></div>
<div class="a" style="left:518.5px;top:412px;width:18px;height:1px;background:#c9c9c9;"></div>
<div class="a" style="left:518.5px;top:419.5px;width:18px;height:1px;background:#c9c9c9;"></div>
<div class="a" style="left:553px;top:400px;width:1px;height:27px;background:#4a4a4a;"></div>
<svg style="left:579.3px;top:400.7px" width="7" height="21" viewBox="0 0 7 21"><path d="M0.5 0.3 L6.3 20.7" stroke="#c9c9c9" stroke-width="1.3"/></svg>
<svg style="left:613.2px;top:406px" width="5" height="5" viewBox="0 0 5 5"><circle cx="2.5" cy="2.5" r="1.7" fill="#535353" stroke="#d0d0d0" stroke-width="1.1"/></svg>
<div class="a" style="left:0px;top:499px;width:714px;height:1.6px;background:#3a3a3a;"></div>
<div class="a" style="left:1px;top:500.6px;width:713px;height:3.4px;background:#484848;"></div>
<span class="t" style="left:17.3px;top:10.00px;font-size:9.5px;font-weight:bold;color:#ff9a00;letter-spacing:0.800px;">Ai</span>
<span class="t" style="left:472px;top:9.00px;font-size:12px;font-weight:normal;color:#7d7d7d;letter-spacing:-0.633px;">Buscar en Ayuda de Adobe</span>
<span class="t" style="left:11px;top:34.50px;font-size:12px;font-weight:normal;color:#e8e8e8;letter-spacing:0.164px;">Archivo</span>
<span class="t" style="left:66px;top:34.50px;font-size:12px;font-weight:normal;color:#e8e8e8;letter-spacing:-0.227px;">Edición</span>
<span class="t" style="left:119px;top:34.50px;font-size:12px;font-weight:normal;color:#e8e8e8;letter-spacing:0.128px;">Objeto</span>
<span class="t" style="left:169px;top:34.50px;font-size:12px;font-weight:normal;color:#e8e8e8;letter-spacing:0.078px;">Texto</span>
<span class="t" style="left:212px;top:34.50px;font-size:12px;font-weight:normal;color:#e8e8e8;letter-spacing:-0.270px;">Seleccionar</span>
<span class="t" style="left:287.5px;top:34.50px;font-size:12px;font-weight:normal;color:#e8e8e8;letter-spacing:-0.306px;">Efecto</span>
<span class="t" style="left:333.5px;top:34.50px;font-size:12px;font-weight:normal;color:#e8e8e8;letter-spacing:-0.258px;">Ver</span>
<span class="t" style="left:366px;top:34.50px;font-size:12px;font-weight:normal;color:#e8e8e8;letter-spacing:-0.174px;">Ventana</span>
<span class="t" style="left:423px;top:34.50px;font-size:12px;font-weight:normal;color:#e8e8e8;letter-spacing:-0.078px;">Ayuda</span>
<span class="t" style="left:19px;top:65.50px;font-size:11px;font-weight:normal;color:#dcdcdc;letter-spacing:-0.755px;">Caracteres</span>
<span class="t" style="left:242px;top:65.50px;font-size:10px;font-weight:bold;color:#e8e8e8;letter-spacing:-0.691px;border-bottom:1px dotted #bbb;line-height:10px;margin-top:3.7px;">Trazo:</span>
<span class="t" style="left:476.5px;top:65.50px;font-size:10px;font-weight:bold;color:#e8e8e8;letter-spacing:-0.511px;border-bottom:1px dotted #bbb;line-height:10px;margin-top:3.7px;">Opacidad</span>
<span class="t" style="left:56.5px;top:96.00px;font-size:11px;font-weight:bold;color:#b0b0b0;letter-spacing:0.038px;">Rabbit.ai* @ 800 % (...</span>
<span class="t" style="left:205px;top:96.00px;font-size:11px;font-weight:bold;color:#b0b0b0;letter-spacing:-0.042px;">Conejo.ai @ 65.58 %...</span>
<span class="t" style="left:354px;top:96.00px;font-size:11px;font-weight:bold;color:#f0f0f0;letter-spacing:-0.116px;">Sin título</span>
<span class="t" style="left:53px;top:485.30px;font-size:10px;font-weight:normal;color:#f0f0f0;letter-spacing:-0.008px;">50%</span>
<span class="t" style="left:126px;top:485.30px;font-size:10px;font-weight:normal;color:#f0f0f0;letter-spacing:0.438px;">0°</span>
<span class="t" style="left:237px;top:485.30px;font-size:10px;font-weight:normal;color:#f0f0f0;letter-spacing:-1.562px;">1</span>
<span class="t" style="left:420px;top:485.30px;font-size:10px;font-weight:normal;color:#dcdcdc;letter-spacing:0.398px;">Texto</span>
<span class="t" style="left:105.5px;top:243.50px;font-size:48px;font-weight:normal;color:#fff;letter-spacing:-0.016px;line-height:52px;">Lorem</span>
<span class="t" style="left:105.2px;top:285.60px;font-size:48px;font-weight:normal;color:#fff;letter-spacing:1.029px;word-spacing:-5px;line-height:52px;">ipsum dolor</span>
<span class="t" style="left:106.3px;top:326.90px;font-size:48px;font-weight:normal;color:#fff;letter-spacing:-0.164px;line-height:52px;">sit amet</span>
<span class="t" style="left:646px;top:118.00px;font-size:18px;font-weight:normal;color:#e8e8e8;letter-spacing:0.984px;">A</span>
<span class="t" style="left:651px;top:212.50px;font-size:17px;font-weight:normal;color:#d4d4d4;letter-spacing:2.656px;">A</span>
<span class="t" style="left:417px;top:107.50px;font-size:10.5px;font-weight:bold;color:#f4f4f4;letter-spacing:-0.661px;">Carácter</span>
<span class="t" style="left:474px;top:107.50px;font-size:10.5px;font-weight:bold;color:#a2a2a2;letter-spacing:-0.461px;">Párrafo</span>
<span class="t" style="left:519px;top:107.50px;font-size:10.5px;font-weight:bold;color:#a2a2a2;letter-spacing:-0.438px;">OpenType</span>
<span class="t" style="left:434px;top:139.50px;font-size:10px;font-weight:bold;color:#f4f4f4;letter-spacing:-0.521px;">Myriad Pro</span>
<span class="t" style="left:414px;top:165.60px;font-size:10px;font-weight:bold;color:#f4f4f4;letter-spacing:-0.622px;">Regular</span>
<span class="t" style="left:450.5px;top:197.50px;font-size:10.5px;font-weight:normal;color:#f4f4f4;letter-spacing:-0.465px;">72 pt</span>
<span class="t" style="left:567px;top:197.50px;font-size:10.5px;font-weight:normal;color:#f4f4f4;letter-spacing:-0.340px;">60 pt</span>
<span class="t" style="left:450.5px;top:223.50px;font-size:10.5px;font-weight:normal;color:#f4f4f4;letter-spacing:-0.203px;">Auto</span>
<span class="t" style="left:567px;top:223.50px;font-size:10.5px;font-weight:normal;color:#f4f4f4;letter-spacing:-0.844px;">0</span>
<span class="t" style="left:450.5px;top:256.50px;font-size:10.5px;font-weight:normal;color:#f4f4f4;letter-spacing:-0.786px;">100%</span>
<span class="t" style="left:567px;top:256.50px;font-size:10.5px;font-weight:normal;color:#f4f4f4;letter-spacing:-0.786px;">100%</span>
<span class="t" style="left:450.5px;top:282.00px;font-size:10.5px;font-weight:normal;color:#f4f4f4;letter-spacing:-0.339px;">0 pt</span>
<span class="t" style="left:567px;top:282.00px;font-size:10.5px;font-weight:normal;color:#f4f4f4;letter-spacing:-0.047px;">0°</span>
<span class="t" style="left:532px;top:191.30px;font-size:9.5px;font-weight:normal;color:#c9c9c9;letter-spacing:0.625px;font-family:'Liberation Serif',serif;">A</span>
<span class="t" style="left:532px;top:200.50px;font-size:9.5px;font-weight:normal;color:#c9c9c9;letter-spacing:0.625px;font-family:'Liberation Serif',serif;">A</span>
<span class="t" style="left:407.6px;top:221.00px;font-size:12px;font-weight:normal;color:#d6d6d6;letter-spacing:0.384px;">V</span>
<span class="t" style="left:416px;top:221.30px;font-size:12px;font-weight:normal;color:#d6d6d6;letter-spacing:0.584px;">A</span>
<span class="t" style="left:525px;top:220.40px;font-size:10.5px;font-weight:bold;color:#4a4a4a;letter-spacing:2.188px;font-family:'Liberation Serif',serif;">VA</span>
<span class="t" style="left:408px;top:281.10px;font-size:12px;font-weight:normal;color:#d6d6d6;letter-spacing:0.984px;">A</span>
<span class="t" style="left:417.8px;top:278.10px;font-size:8.5px;font-weight:normal;color:#d6d6d6;letter-spacing:0.466px;">a</span>
<span class="t" style="left:529px;top:282.80px;font-size:11.5px;font-weight:bold;color:#c9c9c9;letter-spacing:0.828px;font-family:'Liberation Serif',serif;">T</span>
<span class="t" style="left:506.8px;top:309.50px;font-size:7px;font-weight:bold;color:#c9c9c9;letter-spacing:0.200px;font-family:'Liberation Serif',serif;">1</span>
<span class="t" style="left:535px;top:315.80px;font-size:7px;font-weight:bold;color:#c9c9c9;letter-spacing:0.000px;font-family:'Liberation Serif',serif;">1</span>
<span class="t" style="left:413.5px;top:342.50px;font-size:10px;font-weight:bold;color:#f4f4f4;letter-spacing:-0.651px;">Español</span>
<span class="t" style="left:520.8px;top:339.60px;font-size:10px;font-weight:normal;color:#d0d0d0;letter-spacing:0.238px;">a</span>
<span class="t" style="left:527.3px;top:343.40px;font-size:13px;font-weight:bold;color:#d0d0d0;letter-spacing:0.666px;">a</span>
<span class="t" style="left:548.5px;top:342.50px;font-size:10.5px;font-weight:normal;color:#787878;letter-spacing:-0.482px;">Enfocado</span>
<span class="t" style="left:406.5px;top:376.50px;font-size:10.5px;font-weight:normal;color:#c6c6c6;letter-spacing:-0.226px;">Ajustar a pictograma</span>
<span class="t" style="left:573.5px;top:375.30px;font-size:11px;font-weight:normal;color:#c9c9c9;letter-spacing:0.656px;">A</span>
<span class="t" style="left:582.5px;top:376.30px;font-size:11px;font-weight:normal;color:#c9c9c9;letter-spacing:-0.125px;">g</span>
<span class="t" style="left:412px;top:406.00px;font-size:14px;font-weight:normal;color:#d4d4d4;letter-spacing:-0.344px;">Ax</span>
<span class="t" style="left:446px;top:406.30px;font-size:14px;font-weight:normal;color:#d4d4d4;letter-spacing:0.156px;">Ax</span>
<span class="t" style="left:483px;top:405.30px;font-size:14px;font-weight:normal;color:#f4f4f4;letter-spacing:-0.625px;">Ag</span>
<span class="t" style="left:520.5px;top:406.00px;font-size:14.5px;font-weight:normal;color:#d4d4d4;letter-spacing:-2.250px;">Ag</span>
<span class="t" style="left:572.8px;top:405.80px;font-size:14.5px;font-weight:normal;color:#d0d0d0;letter-spacing:-0.472px;">A</span>
<span class="t" style="left:608.2px;top:406.40px;font-size:13px;font-weight:normal;color:#d0d0d0;letter-spacing:0.928px;">A</span>
</body></html>
